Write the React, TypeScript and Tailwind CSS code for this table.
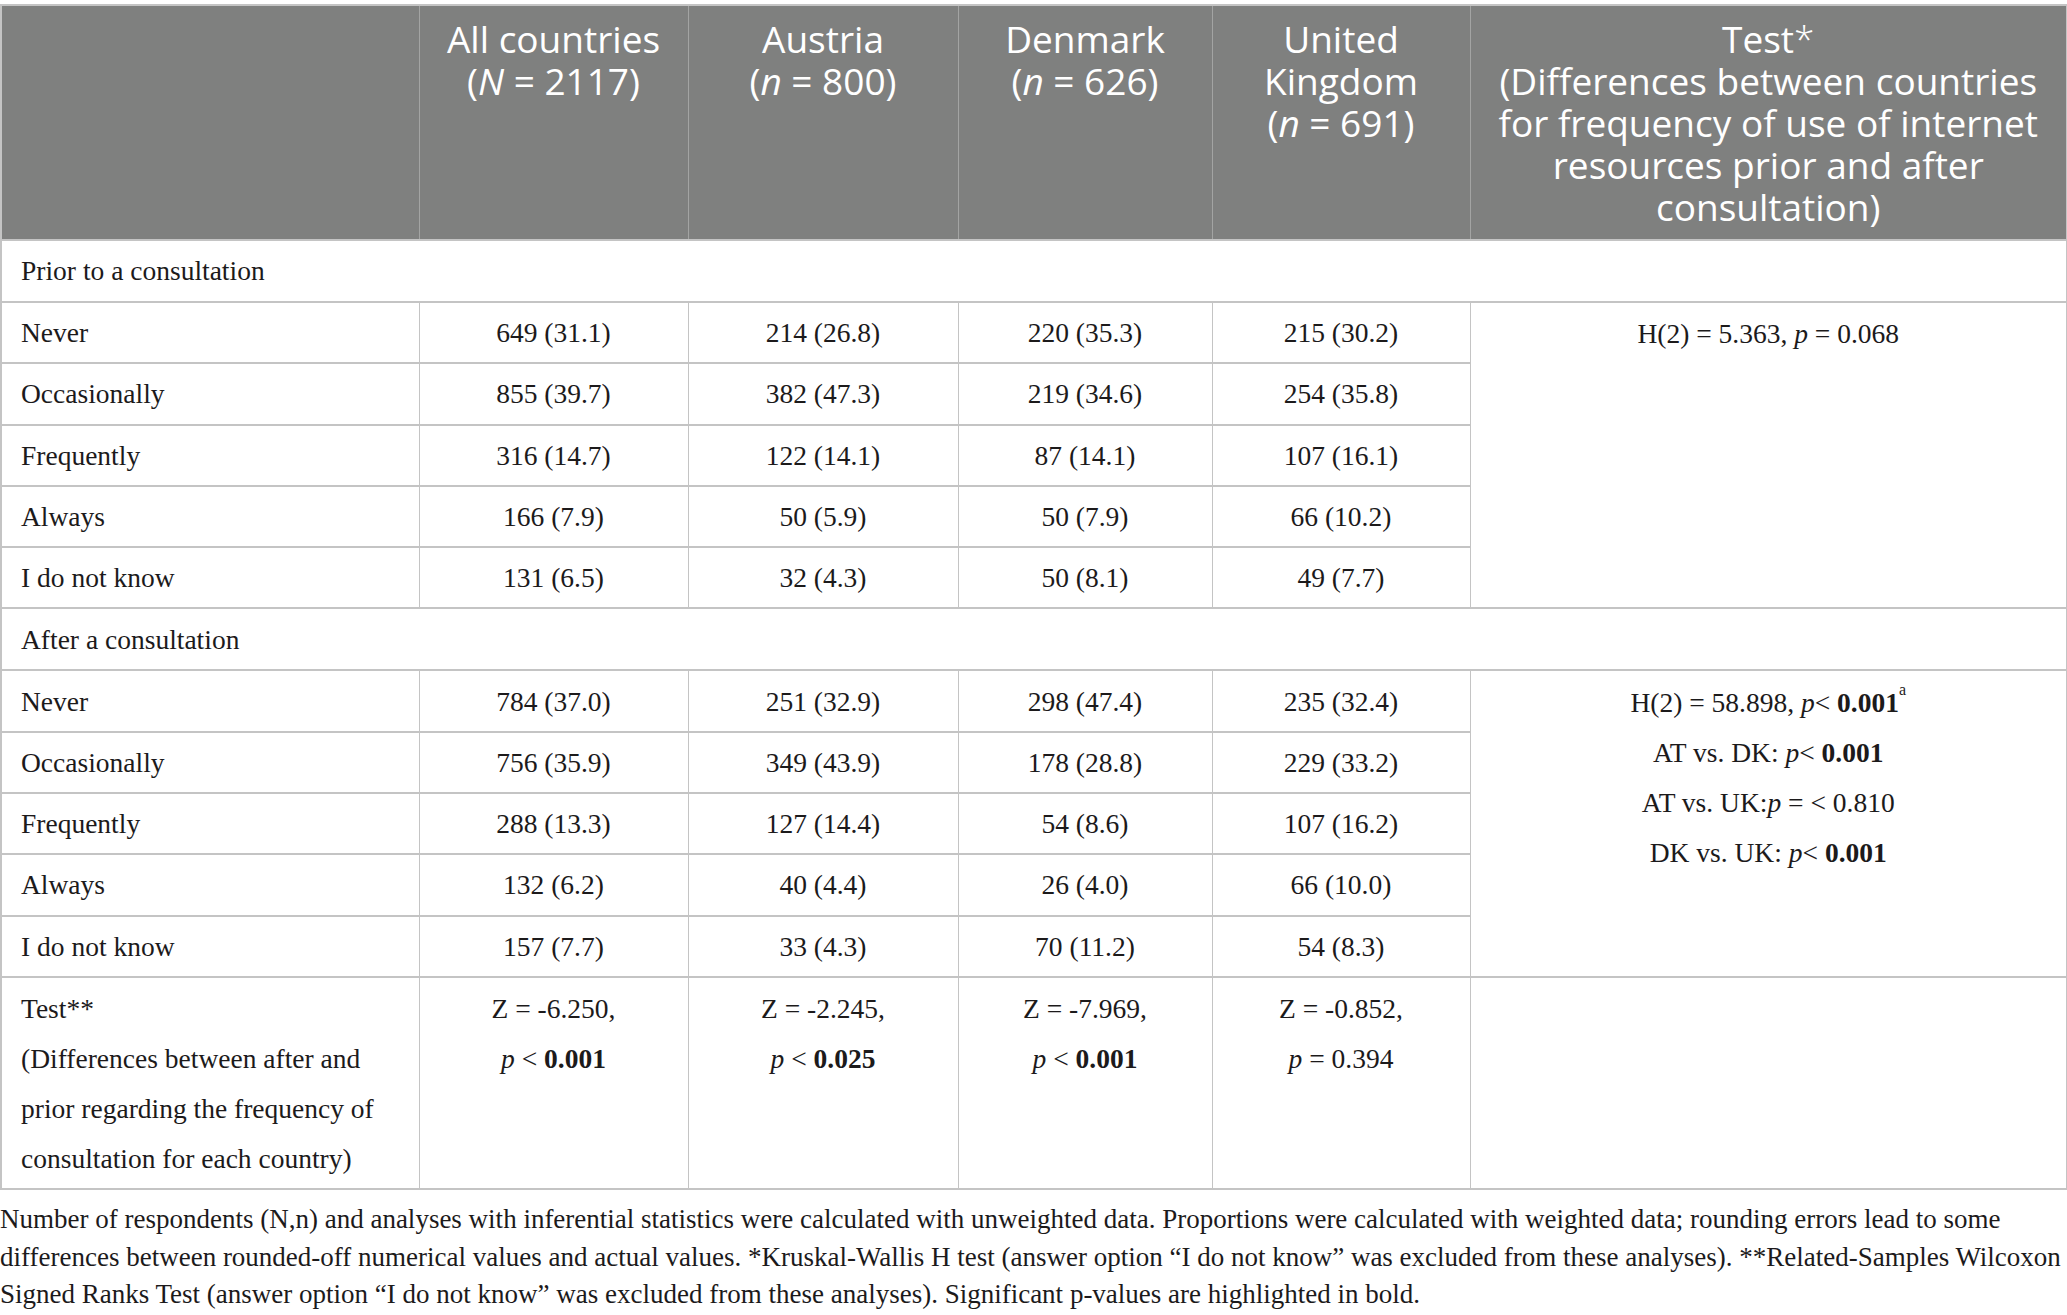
import React from "react";

const serif = "font-['Liberation_Serif','Times_New_Roman',serif]";

const priorRows = [
  ["Never", "649 (31.1)", "214 (26.8)", "220 (35.3)", "215 (30.2)"],
  ["Occasionally", "855 (39.7)", "382 (47.3)", "219 (34.6)", "254 (35.8)"],
  ["Frequently", "316 (14.7)", "122 (14.1)", "87 (14.1)", "107 (16.1)"],
  ["Always", "166 (7.9)", "50 (5.9)", "50 (7.9)", "66 (10.2)"],
  ["I do not know", "131 (6.5)", "32 (4.3)", "50 (8.1)", "49 (7.7)"],
];

const afterRows = [
  ["Never", "784 (37.0)", "251 (32.9)", "298 (47.4)", "235 (32.4)"],
  ["Occasionally", "756 (35.9)", "349 (43.9)", "178 (28.8)", "229 (33.2)"],
  ["Frequently", "288 (13.3)", "127 (14.4)", "54 (8.6)", "107 (16.2)"],
  ["Always", "132 (6.2)", "40 (4.4)", "26 (4.0)", "66 (10.0)"],
  ["I do not know", "157 (7.7)", "33 (4.3)", "70 (11.2)", "54 (8.3)"],
];

const wilcoxon = [
  { z: "-6.250", p: "0.001", sig: true },
  { z: "-2.245", p: "0.025", sig: true },
  { z: "-7.969", p: "0.001", sig: true },
  { z: "-0.852", p: "0.394", sig: false },
];

const cell = "border-x border-y-2 border-[#c4c4c4]";
const headCell = "border-x border-[#a3a4a3] align-top text-center pt-[12px] font-normal";

const P = () => <i>p</i>;

const HeaderRow = () => (
  <tr className="h-[235px] bg-[#7f807f] text-white font-['Open_Sans',sans-serif] text-[37px] leading-[42px]">
    <th className={headCell}></th>
    <th className={headCell}>
      All countries
      <br />(<i>N</i> = 2117)
    </th>
    <th className={headCell}>
      Austria
      <br />(<i>n</i> = 800)
    </th>
    <th className={headCell}>
      Denmark
      <br />(<i>n</i> = 626)
    </th>
    <th className={headCell}>
      United
      <br />
      Kingdom
      <br />(<i>n</i> = 691)
    </th>
    <th className={headCell}>
      Test<span className="font-light">*</span>
      <br />
      (Differences between countries
      <br />
      for frequency of use of internet
      <br />
      resources prior and after
      <br />
      consultation)
    </th>
  </tr>
);

const SectionRow = ({ label }: { label: string }) => (
  <tr className="h-[62px]">
    <td colSpan={6} className={`${cell} pl-[19px]`}>
      {label}
    </td>
  </tr>
);

export default function App() {
  return (
    <div className={`min-h-screen bg-white pt-[4px] text-[#1c1a1b] ${serif}`}>
      <table className="w-[2066px] table-fixed border-collapse border-2 border-[#c4c4c4] text-[27.5px]">
        <colgroup>
          <col className="w-[418px]" />
          <col className="w-[269px]" />
          <col className="w-[270px]" />
          <col className="w-[254px]" />
          <col className="w-[258px]" />
          <col className="w-[597px]" />
        </colgroup>
        <thead>
          <HeaderRow />
        </thead>
        <tbody>
          <SectionRow label="Prior to a consultation" />
          {priorRows.map((r, i) => (
            <tr key={r[0]} className="h-[61.3px]">
              <td className={`${cell} pl-[19px]`}>{r[0]}</td>
              {r.slice(1).map((v, j) => (
                <td key={j} className={`${cell} text-center`}>
                  {v}
                </td>
              ))}
              {i === 0 && (
                <td rowSpan={5} className={`${cell} text-center align-top pt-[6px] leading-[50px]`}>
                  H(2) = 5.363, <P /> = 0.068
                </td>
              )}
            </tr>
          ))}
          <SectionRow label="After a consultation" />
          {afterRows.map((r, i) => (
            <tr key={r[0]} className="h-[61.3px]">
              <td className={`${cell} pl-[19px]`}>{r[0]}</td>
              {r.slice(1).map((v, j) => (
                <td key={j} className={`${cell} text-center`}>
                  {v}
                </td>
              ))}
              {i === 0 && (
                <td rowSpan={5} className={`${cell} text-center align-top pt-[7px] leading-[50px]`}>
                  <div>
                    H(2) = 58.898, <P />
                    &lt; <b>0.001</b>
                    <sup className="text-[16px] align-[9px]">a</sup>
                  </div>
                  <div>
                    AT vs. DK: <P />
                    &lt; <b>0.001</b>
                  </div>
                  <div>
                    AT vs. UK:<P /> = &lt; 0.810
                  </div>
                  <div>
                    DK vs. UK: <P />
                    &lt; <b>0.001</b>
                  </div>
                </td>
              )}
            </tr>
          ))}
          <tr className="h-[212px]">
            <td className={`${cell} pl-[19px] align-top pt-[6px] leading-[50px]`}>
              Test**
              <br />
              (Differences between after and prior regarding the frequency of consultation for each country)
            </td>
            {wilcoxon.map((w, i) => (
              <td key={i} className={`${cell} text-center align-top pt-[6px] leading-[50px]`}>
                <div>Z = {w.z},</div>
                <div>
                  <P /> {w.sig ? "<" : "="} {w.sig ? <b>{w.p}</b> : w.p}
                </div>
              </td>
            ))}
            <td className={cell}></td>
          </tr>
        </tbody>
      </table>
      <p className="pt-[11px] text-[27px] leading-[37.6px]">
        Number of respondents (N,n) and analyses with inferential statistics were calculated with unweighted data.
        Proportions were calculated with weighted data; rounding errors lead to some
        <br />
        differences between rounded-off numerical values and actual values. *Kruskal-Wallis H test (answer option “I
        do not know” was excluded from these analyses). **Related-Samples Wilcoxon
        <br />
        Signed Ranks Test (answer option “I do not know” was excluded from these analyses). Significant p-values are
        highlighted in bold.
      </p>
    </div>
  );
}
